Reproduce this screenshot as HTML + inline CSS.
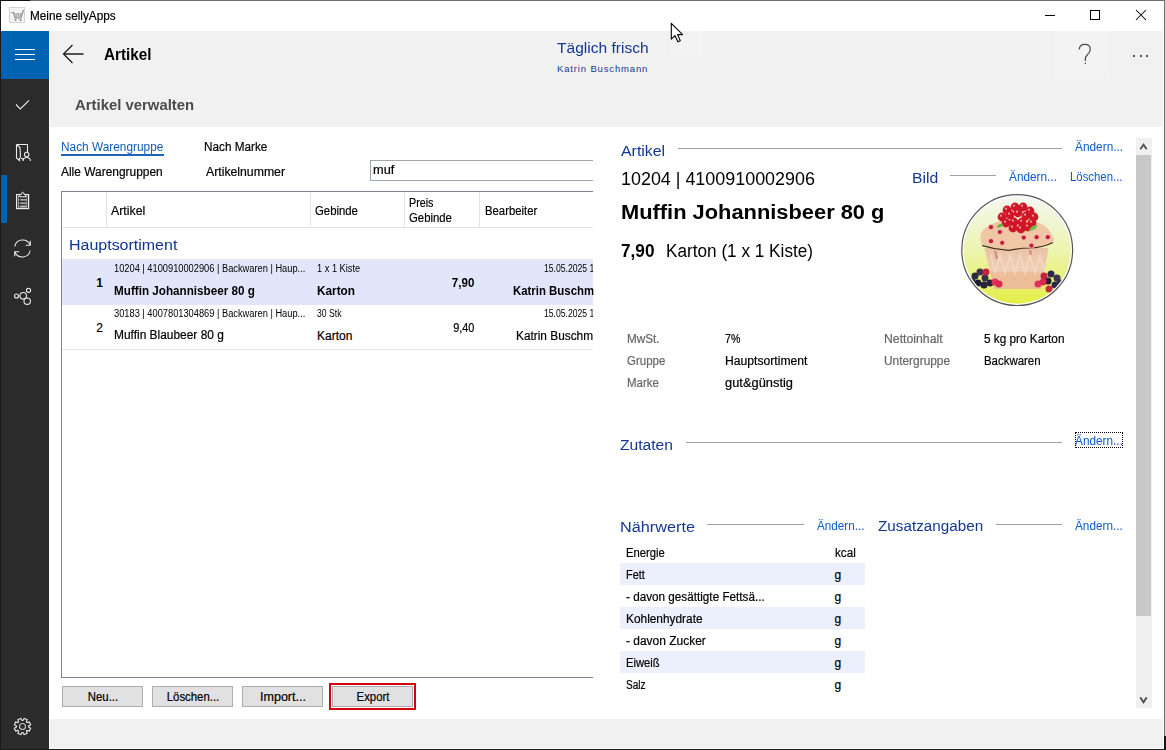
<!DOCTYPE html>
<html><head><meta charset="utf-8"><style>
html,body{margin:0;padding:0;width:1166px;height:750px;overflow:hidden;background:#fff;}
body{position:relative;font-family:"Liberation Sans",sans-serif;}
.t{position:absolute;line-height:1;white-space:nowrap;}
.s{-webkit-text-stroke:0.2px currentColor;}
.a{position:absolute;}
</style></head><body>
<!-- window chrome -->
<div class="a" style="left:0;top:0;width:1166px;height:1px;background:#6e6e6e"></div>
<div class="a" style="left:0;top:0;width:30px;height:1px;background:#111"></div>
<div class="a" style="left:0;top:0;width:1px;height:750px;background:#1a1a1a"></div>
<div class="a" style="left:1164px;top:0;width:1px;height:750px;background:#6e6e6e"></div>
<div class="a" style="left:1165px;top:0;width:1px;height:736px;background:#d4d4d4"></div>
<div class="a" style="left:1164px;top:736px;width:2px;height:14px;background:#161616"></div>
<div class="a" style="left:0;top:749px;width:1166px;height:1px;background:#1a1a1a"></div>
<!-- title bar icon -->
<div class="a" style="left:9px;top:7px;width:14px;height:14px;background:#f3f3f3;border:1px solid #d4d4d4"></div>
<svg class="a" style="left:9px;top:7px" width="17" height="17" viewBox="0 0 17 17">
 <path d="M2.5 5.5 L4.5 5.5 L6 11 L12 11 L13.5 6 L14.5 3" fill="none" stroke="#8a8a8a" stroke-width="1.1"/>
 <path d="M5 7 L13 7 M5.5 9 L12.5 9 M7 6 L7.5 11 M9.5 6 L9.5 11 M12 6 L11.2 11" fill="none" stroke="#a0a0a0" stroke-width="0.8"/>
 <circle cx="6.5" cy="13" r="1" fill="#8a8a8a"/><circle cx="11.5" cy="13" r="1" fill="#8a8a8a"/>
</svg>
<!-- caption buttons -->
<div class="a" style="left:1045px;top:15px;width:10px;height:1px;background:#000"></div>
<div class="a" style="left:1090px;top:10px;width:8px;height:8px;border:1px solid #000"></div>
<svg class="a" style="left:1135px;top:9px" width="12" height="12" viewBox="0 0 12 12"><path d="M1 1 L11 11 M11 1 L1 11" stroke="#000" stroke-width="1.05" fill="none"/></svg>

<!-- sidebar -->
<div class="a" style="left:1px;top:31px;width:48px;height:718px;background:#2b2b2b"></div>
<div class="a" style="left:1px;top:31px;width:48px;height:48px;background:#0063b1"></div>
<div class="a" style="left:15px;top:49px;width:20px;height:1px;background:#fff"></div>
<div class="a" style="left:15px;top:54px;width:20px;height:1px;background:#fff"></div>
<div class="a" style="left:15px;top:59px;width:20px;height:1px;background:#fff"></div>
<div class="a" style="left:1px;top:175px;width:6px;height:48px;background:#0063b1"></div>
<svg class="a" style="left:0;top:80px" width="49" height="670" viewBox="0 80 49 670">
 <g fill="none" stroke="#ececec" stroke-width="1.1">
  <!-- check -->
  <path d="M16 104.5 L20.3 109 L29 100.3"/>
  <!-- book/person -->
  <path d="M16.5 144.5 L27.5 144.5 L27.5 152.5 M16.5 144.5 L16.5 158 L19.5 160.5 L19.5 158.5 M16.5 144.5 L20 147.5 L20.5 157 L19.5 158.5 M21 158.5 L23 158.5 L23 160.5"/>
  <circle cx="26.7" cy="154.5" r="2.2"/>
  <path d="M23 160.8 Q23.5 157.5 26.7 157.5 Q30 157.5 30.5 160.8"/>
  <!-- clipboard -->
  <rect x="16.6" y="194.6" width="12" height="14" stroke-width="1.2"/>
  <rect x="18.3" y="196.6" width="8.6" height="10.6" stroke-width="0.7" stroke="#bdbdbd"/>
  <path d="M19.8 194.3 L19.8 196.8 L25.6 196.8 L25.6 194.3 L24 194.3 Q23.6 192.2 22.7 192.2 Q21.8 192.2 21.4 194.3 Z" fill="#2b2b2b" stroke-width="1"/>
  <path d="M20.3 199.8 H26.6 M20.3 203.1 H26.6 M20.3 206.2 H26.6" stroke="#d4d4d4" stroke-width="1.3"/>
  <path d="M18.6 199.8 H19.4 M18.6 203.1 H19.4 M18.6 206.2 H19.4" stroke="#e0e0e0" stroke-width="1"/>
 </g>
 <g fill="none" stroke="#ececec" stroke-width="1.1">
  <!-- sync -->
  <path d="M14.8 246.5 A8 8 0 0 1 30 244.8"/>
  <path d="M30.2 250.5 A8 8 0 0 1 15 252.2"/>
  <path d="M30.3 240.8 L30.3 245.3 L25.8 245.3"/>
  <path d="M14.7 256.2 L14.7 251.7 L19.2 251.7"/>
  <!-- share -->
  <circle cx="16.5" cy="296" r="2"/>
  <circle cx="23.2" cy="295.8" r="3.3"/>
  <circle cx="28.5" cy="290.3" r="2.1"/>
  <circle cx="27.2" cy="301.2" r="3.2"/>
  <!-- gear -->
 </g>
 <g transform="translate(22.5 726.5)" fill="none" stroke="#ececec" stroke-width="1.1">
  <path id="gear" d="M5.98 -0.47 L8.13 -1.65 L6.92 -4.58 L4.56 -3.90 L3.90 -4.56 L4.58 -6.92 L1.65 -8.13 L0.47 -5.98 L-0.47 -5.98 L-1.65 -8.13 L-4.58 -6.92 L-3.90 -4.56 L-4.56 -3.90 L-6.92 -4.58 L-8.13 -1.65 L-5.98 -0.47 L-5.98 0.47 L-8.13 1.65 L-6.92 4.58 L-4.56 3.90 L-3.90 4.56 L-4.58 6.92 L-1.65 8.13 L-0.47 5.98 L0.47 5.98 L1.65 8.13 L4.58 6.92 L3.90 4.56 L4.56 3.90 L6.92 4.58 L8.13 1.65 L5.98 0.47 Z"/>
  <circle r="3" stroke="#c8c8c8"/>
 </g>
</svg>

<!-- header -->
<div class="a" style="left:50px;top:31px;width:1113px;height:96px;background:#f1f1f1"></div><div class="a" style="left:1054px;top:31px;width:55px;height:48px;background:#f3f3f3"></div><div class="a" style="left:671px;top:31px;width:32px;height:24px;background:#f3f3f3"></div>
<svg class="a" style="left:60px;top:42px" width="26" height="24" viewBox="0 0 26 24"><path d="M3.5 12 H23.5 M12.5 3 L3.5 12 L12.5 21" fill="none" stroke="#1f1f1f" stroke-width="1.3"/></svg>
<svg class="a" style="left:1070px;top:40px" width="30" height="30" viewBox="0 0 30 30"><path d="M9.2 9.5 Q9.5 4.3 14.8 4.3 Q20.3 4.3 20.3 9.3 Q20.3 12.3 17.5 14.5 Q15.3 16.5 15.3 19.8 L15.3 21" fill="none" stroke="#4a4a4a" stroke-width="1.2"/><circle cx="15.3" cy="23.3" r="0.8" fill="#4a4a4a"/></svg>
<div class="a" style="left:1133px;top:55px;width:2.2px;height:2.2px;border-radius:1px;background:#222"></div>
<div class="a" style="left:1139.5px;top:55px;width:2.2px;height:2.2px;border-radius:1px;background:#222"></div>
<div class="a" style="left:1146px;top:55px;width:2.2px;height:2.2px;border-radius:1px;background:#222"></div>

<!-- bottom bar -->
<div class="a" style="left:50px;top:719px;width:1113px;height:29px;background:#f1f1f1"></div>

<!-- left panel -->
<div class="a" style="left:61px;top:154px;width:103px;height:2px;background:#1c64bc"></div>
<div class="a" style="left:370px;top:160px;width:240px;height:19px;border:1px solid #a2a6ad;background:#fff"></div>
<div class="a" style="left:61px;top:191px;width:532px;height:487px;border-top:1px solid #7e8591;border-left:1px solid #7e8591;border-bottom:1px solid #7e8591;box-sizing:border-box"></div>
<div class="a" style="left:593px;top:150px;width:20px;height:560px;background:#fff"></div>
<div class="a" style="left:106px;top:192px;width:1px;height:35px;background:#e3e3e3"></div>
<div class="a" style="left:309.5px;top:192px;width:1px;height:35px;background:#e3e3e3"></div>
<div class="a" style="left:403.5px;top:192px;width:1px;height:35px;background:#e3e3e3"></div>
<div class="a" style="left:479px;top:192px;width:1px;height:35px;background:#e3e3e3"></div>
<div class="a" style="left:62px;top:227px;width:531px;height:1px;background:#e3e3e3"></div>
<div class="a" style="left:62px;top:259px;width:531px;height:1px;background:#e8e8e8"></div>
<div class="a" style="left:62px;top:260px;width:531px;height:45px;background:#e1e6fa"></div>
<div class="a" style="left:62px;top:349px;width:531px;height:1px;background:#e8e8e8"></div>
<!-- buttons -->
<div class="a" style="left:62px;top:686px;width:81px;height:21px;box-sizing:border-box;border:1px solid #adadad;background:#e1e1e1"></div>
<div class="a" style="left:152px;top:686px;width:81px;height:21px;box-sizing:border-box;border:1px solid #adadad;background:#e1e1e1"></div>
<div class="a" style="left:242px;top:686px;width:81px;height:21px;box-sizing:border-box;border:1px solid #adadad;background:#e1e1e1"></div>
<div class="a" style="left:329px;top:683px;width:87px;height:27px;box-sizing:border-box;border:2px solid #d3000f"></div>
<div class="a" style="left:332px;top:686px;width:81px;height:21px;box-sizing:border-box;border:1px solid #adadad;background:#e1e1e1"></div>

<!-- right panel -->
<div class="a" style="left:678px;top:148px;width:384px;height:1px;background:#a0a0a0"></div>
<div class="a" style="left:950px;top:175px;width:46px;height:1px;background:#a0a0a0"></div>
<div class="a" style="left:686px;top:442px;width:376px;height:1px;background:#a0a0a0"></div>
<div class="a" style="left:707px;top:524px;width:97px;height:1px;background:#a0a0a0"></div>
<div class="a" style="left:996px;top:524px;width:66px;height:1px;background:#a0a0a0"></div>
<div class="a" style="left:1075px;top:432px;width:48px;height:16px;box-sizing:border-box;border:1px dotted #000"></div>
<div class="a" style="left:620px;top:563px;width:245px;height:22px;background:#ebf0fc"></div>
<div class="a" style="left:620px;top:607px;width:245px;height:22px;background:#ebf0fc"></div>
<div class="a" style="left:620px;top:651px;width:245px;height:22px;background:#ebf0fc"></div>
<!-- scrollbar -->
<div class="a" style="left:1136px;top:138px;width:16px;height:570px;background:#f0f0f0"></div>
<div class="a" style="left:1136px;top:155px;width:15px;height:461px;background:#c8c8c8"></div>
<svg class="a" style="left:1136px;top:138px" width="16" height="17" viewBox="0 0 16 17"><path d="M4.3 11.3 L7.5 6.6 L10.7 11.3" fill="none" stroke="#555" stroke-width="1.9"/></svg>
<svg class="a" style="left:1136px;top:691px" width="16" height="17" viewBox="0 0 16 17"><path d="M4.3 6.4 L7.5 11.2 L10.7 6.4" fill="none" stroke="#555" stroke-width="1.9"/></svg>
<!-- image -->
<svg class="a" style="left:960px;top:193px" width="114" height="114" viewBox="0 0 114 114" id="cupcake"><defs><linearGradient id="bg" x1="0" y1="0" x2="0" y2="1"><stop offset="0" stop-color="#f6f8f0"/><stop offset="0.25" stop-color="#eff5d2"/><stop offset="0.5" stop-color="#edf4b0"/><stop offset="0.8" stop-color="#e8f070"/><stop offset="1" stop-color="#e4ee48"/></linearGradient><linearGradient id="wr" x1="0" y1="0" x2="0" y2="1"><stop offset="0" stop-color="#eac3a6"/><stop offset="0.55" stop-color="#efcfb5"/><stop offset="0.6" stop-color="#efbf9c"/><stop offset="1" stop-color="#ecbc98"/></linearGradient><filter id="bl" x="-0.2" y="-0.2" width="1.4" height="1.4"><feGaussianBlur stdDeviation="0.45"/></filter><clipPath id="cc"><circle cx="57.2" cy="57.1" r="53.6"/></clipPath></defs><circle cx="57.2" cy="57.1" r="55.4" fill="#fff" stroke="#555" stroke-width="1.2"/><circle cx="57.2" cy="57.1" r="53.6" fill="url(#bg)"/><g clip-path="url(#cc)" filter="url(#bl)"><path d="M24.4 55 L88.5 55 L81.6 96 L34 96 Z" fill="url(#wr)"/><path d="M31 62 L35 80 L40 62 L45 80 L50 62 L55 80 L60 62 L65 80 L70 62 L75 80 L80 62 L84 78" fill="none" stroke="#f8e6d6" stroke-width="1.8" opacity="0.5"/><path d="M35 58 L37 66 M70 57 L71 62" stroke="#c86060" stroke-width="2.2" opacity="0.6"/><path d="M22 52.5 Q18 42 24 36 Q34 28 46 27 L70 27 Q86 30 91 40 Q95 46 93 49.5 Q82 55.5 71 55 Q60 55 50 57.5 Q38 57 22 52.5 Z" fill="#efc7a5"/><path d="M22.2 52.6 Q35 56.5 48.6 57.4 Q60 55 71 55 Q84 54 93 49.4" fill="none" stroke="#4a3222" stroke-width="1.1"/><circle cx="31" cy="34.2" r="3.2" fill="#f6b6b0" opacity="0.7"/><circle cx="31" cy="34.2" r="2.1" fill="#c41c34"/><circle cx="39.8" cy="39" r="3.2" fill="#f6b6b0" opacity="0.7"/><circle cx="39.8" cy="39" r="2.1" fill="#c41c34"/><circle cx="31" cy="48.2" r="3.2" fill="#f6b6b0" opacity="0.7"/><circle cx="31" cy="48.2" r="2.1" fill="#c41c34"/><circle cx="42.2" cy="49.8" r="3.2" fill="#f6b6b0" opacity="0.7"/><circle cx="42.2" cy="49.8" r="2.1" fill="#c41c34"/><circle cx="63.8" cy="44.6" r="3.2" fill="#f6b6b0" opacity="0.7"/><circle cx="63.8" cy="44.6" r="2.1" fill="#c41c34"/><circle cx="76.6" cy="44.2" r="3.2" fill="#f6b6b0" opacity="0.7"/><circle cx="76.6" cy="44.2" r="2.1" fill="#c41c34"/><circle cx="87.8" cy="44.2" r="3.2" fill="#f6b6b0" opacity="0.7"/><circle cx="87.8" cy="44.2" r="2.1" fill="#c41c34"/><circle cx="71.4" cy="52.6" r="3.2" fill="#f6b6b0" opacity="0.7"/><circle cx="71.4" cy="52.6" r="2.1" fill="#c41c34"/><circle cx="47" cy="17" r="4.4" fill="#d01626"/><circle cx="55" cy="14" r="4.4" fill="#d01626"/><circle cx="63" cy="14" r="4.4" fill="#d01626"/><circle cx="70" cy="18" r="4.4" fill="#d01626"/><circle cx="74" cy="24" r="4.4" fill="#d01626"/><circle cx="42" cy="24" r="4.4" fill="#d01626"/><circle cx="50" cy="22" r="4.4" fill="#d01626"/><circle cx="58" cy="20" r="4.4" fill="#d01626"/><circle cx="66" cy="23" r="4.4" fill="#d01626"/><circle cx="72" cy="30" r="4.4" fill="#d01626"/><circle cx="46" cy="30" r="4.4" fill="#d01626"/><circle cx="54" cy="29" r="4.4" fill="#d01626"/><circle cx="62" cy="29" r="4.4" fill="#d01626"/><circle cx="53" cy="35" r="4.4" fill="#d01626"/><circle cx="61" cy="36" r="4.4" fill="#d01626"/><circle cx="68" cy="34" r="4.4" fill="#d01626"/><circle cx="46" cy="15.7" r="1.1" fill="#f7b8c0" opacity="0.85"/><circle cx="54" cy="12.7" r="1.1" fill="#f7b8c0" opacity="0.85"/><circle cx="62" cy="12.7" r="1.1" fill="#f7b8c0" opacity="0.85"/><circle cx="69" cy="16.7" r="1.1" fill="#f7b8c0" opacity="0.85"/><circle cx="73" cy="22.7" r="1.1" fill="#f7b8c0" opacity="0.85"/><circle cx="41" cy="22.7" r="1.1" fill="#f7b8c0" opacity="0.85"/><circle cx="49" cy="20.7" r="1.1" fill="#f7b8c0" opacity="0.85"/><circle cx="57" cy="18.7" r="1.1" fill="#f7b8c0" opacity="0.85"/><circle cx="65" cy="21.7" r="1.1" fill="#f7b8c0" opacity="0.85"/><circle cx="71" cy="28.7" r="1.1" fill="#f7b8c0" opacity="0.85"/><circle cx="45" cy="28.7" r="1.1" fill="#f7b8c0" opacity="0.85"/><circle cx="53" cy="27.7" r="1.1" fill="#f7b8c0" opacity="0.85"/><circle cx="61" cy="27.7" r="1.1" fill="#f7b8c0" opacity="0.85"/><circle cx="52" cy="33.7" r="1.1" fill="#f7b8c0" opacity="0.85"/><circle cx="60" cy="34.7" r="1.1" fill="#f7b8c0" opacity="0.85"/><circle cx="67" cy="32.7" r="1.1" fill="#f7b8c0" opacity="0.85"/><path d="M36.5 34.5 Q39 29.5 43 31 Q42 35 36.5 34.5 Z" fill="#58b43a"/><path d="M68.5 38 Q72 31 77.5 32 Q76.5 37.5 68.5 38 Z" fill="#6cc04a"/><circle cx="15" cy="83" r="3.5" fill="#2a2a48"/><circle cx="20" cy="79" r="3.5" fill="#3a3050"/><circle cx="18" cy="90" r="3.5" fill="#1c1a30"/><circle cx="25" cy="85" r="3.5" fill="#30304a"/><circle cx="26" cy="79" r="3.5" fill="#c82040"/><circle cx="24" cy="92" r="3.5" fill="#262238"/><circle cx="12" cy="88" r="3.5" fill="#34304a"/><circle cx="30" cy="90" r="3.5" fill="#2a2440"/><circle cx="35" cy="89" r="3.5" fill="#e0305a"/><circle cx="39" cy="91" r="3.5" fill="#d82a50"/><circle cx="91" cy="81" r="3.5" fill="#2c2c48"/><circle cx="97" cy="85" r="3.5" fill="#3a3050"/><circle cx="88" cy="88" r="3.5" fill="#1c1a30"/><circle cx="95" cy="92" r="3.5" fill="#2c2a44"/><circle cx="84" cy="83" r="3.5" fill="#c42040"/><circle cx="78" cy="91" r="3.5" fill="#e0305a"/><circle cx="89" cy="96" r="3.5" fill="#c82844"/><circle cx="100" cy="90" r="3.5" fill="#342e48"/><circle cx="83" cy="89" r="3.5" fill="#d42c50"/></g></svg>
<!-- cursor -->
<svg class="a" style="left:670px;top:22px" width="16" height="22" viewBox="0 0 16 22"><path d="M1.3 1.3 L1.3 17.2 L5 13.6 L7.8 19.8 L10.3 18.7 L7.6 12.6 L12.6 12.6 Z" fill="#fff" stroke="#000" stroke-width="1.1" stroke-linejoin="round"/></svg>

<span class="t s" style="top:10.00px;font-size:12px;color:#000;left:30.30px;transform-origin:0 0;transform:scaleX(0.9808);">Meine sellyApps</span>
<span class="t" style="top:47.01px;font-size:16px;color:#000;font-weight:700;left:104.00px;transform-origin:0 0;transform:scaleX(0.9524);">Artikel</span>
<span class="t" style="top:40.01px;font-size:15.5px;color:#143794;left:557.00px;transform-origin:0 0;transform:scaleX(1.0035);">Täglich frisch</span>
<span class="t" style="top:64.00px;font-size:9.5px;color:#143794;left:557.00px;transform-origin:0 0;letter-spacing:0.85px;">Katrin Buschmann</span>
<span class="t" style="top:97.00px;font-size:15px;color:#4b4b4b;font-weight:700;left:75.00px;transform-origin:0 0;transform:scaleX(0.9926);">Artikel verwalten</span>
<span class="t" style="top:141.01px;font-size:12px;color:#0f5bb5;left:61.30px;transform-origin:0 0;transform:scaleX(0.9881);">Nach Warengruppe</span>
<span class="t s" style="top:141.01px;font-size:12px;color:#000;left:204.40px;transform-origin:0 0;transform:scaleX(0.9783);">Nach Marke</span>
<span class="t s" style="top:166.01px;font-size:12px;color:#000;left:61.00px;transform-origin:0 0;transform:scaleX(0.9940);">Alle Warengruppen</span>
<span class="t s" style="top:166.01px;font-size:12px;color:#000;left:205.60px;transform-origin:0 0;transform:scaleX(1.0213);">Artikelnummer</span>
<span class="t s" style="top:164.01px;font-size:12px;color:#000;left:373.30px;transform-origin:0 0;transform:scaleX(1.0643);">muf</span>
<span class="t s" style="top:205.00px;font-size:12px;color:#000;left:111.00px;transform-origin:0 0;transform:scaleX(1.0283);">Artikel</span>
<span class="t s" style="top:205.01px;font-size:12px;color:#000;left:314.70px;transform-origin:0 0;transform:scaleX(0.9454);">Gebinde</span>
<span class="t s" style="top:197.01px;font-size:12px;color:#000;left:408.60px;transform-origin:0 0;transform:scaleX(0.8925);">Preis</span>
<span class="t s" style="top:212.01px;font-size:12px;color:#000;left:408.60px;transform-origin:0 0;transform:scaleX(0.9454);">Gebinde</span>
<span class="t s" style="top:205.01px;font-size:12px;color:#000;left:484.50px;transform-origin:0 0;transform:scaleX(0.9428);">Bearbeiter</span>
<span class="t" style="top:237.01px;font-size:15.5px;color:#0d3596;left:68.70px;transform-origin:0 0;transform:scaleX(1.0306);">Hauptsortiment</span>
<span class="t" style="top:277.01px;font-size:12px;color:#000;font-weight:700;left:96.30px;transform-origin:0 0;">1</span>
<span class="t" style="top:264.01px;font-size:10px;color:#000;left:114.40px;transform-origin:0 0;transform:scaleX(0.9275);">10204 | 4100910002906 | Backwaren | Haup...</span>
<span class="t" style="top:285.00px;font-size:12px;color:#000;font-weight:700;left:114.40px;transform-origin:0 0;transform:scaleX(0.9740);">Muffin Johannisbeer 80 g</span>
<span class="t" style="top:264.01px;font-size:10px;color:#000;left:317.00px;transform-origin:0 0;transform:scaleX(0.9230);">1 x 1 Kiste</span>
<span class="t" style="top:285.01px;font-size:12px;color:#000;font-weight:700;left:317.00px;transform-origin:0 0;transform:scaleX(0.9834);">Karton</span>
<span class="t" style="top:277.00px;font-size:12px;color:#000;font-weight:700;right:691.40px;transform-origin:100% 0;transform:scaleX(0.9628);">7,90</span>
<span class="t" style="top:264.01px;font-size:10px;color:#000;left:544.30px;transform-origin:0 0;width:56.50px;overflow:hidden;transform:scaleX(0.8620);">15.05.2025 11:42</span>
<span class="t" style="top:285.01px;font-size:12px;color:#000;font-weight:700;left:512.60px;transform-origin:0 0;width:84.63px;overflow:hidden;transform:scaleX(0.9500);">Katrin Buschmann</span>
<span class="t s" style="top:322.00px;font-size:12px;color:#000;left:96.30px;transform-origin:0 0;">2</span>
<span class="t" style="top:309.01px;font-size:10px;color:#000;left:114.40px;transform-origin:0 0;transform:scaleX(0.9275);">30183 | 4007801304869 | Backwaren | Haup...</span>
<span class="t s" style="top:329.01px;font-size:12px;color:#000;left:114.40px;transform-origin:0 0;transform:scaleX(0.9941);">Muffin Blaubeer 80 g</span>
<span class="t" style="top:309.01px;font-size:10px;color:#000;left:317.00px;transform-origin:0 0;transform:scaleX(0.8620);">30 Stk</span>
<span class="t s" style="top:330.01px;font-size:12px;color:#000;left:317.00px;transform-origin:0 0;">Karton</span>
<span class="t s" style="top:322.01px;font-size:12px;color:#000;right:691.40px;transform-origin:100% 0;transform:scaleX(0.9079);">9,40</span>
<span class="t" style="top:309.01px;font-size:10px;color:#000;left:544.30px;transform-origin:0 0;width:56.50px;overflow:hidden;transform:scaleX(0.8620);">15.05.2025 11:42</span>
<span class="t s" style="top:330.01px;font-size:12px;color:#000;left:516.00px;transform-origin:0 0;width:78.01px;overflow:hidden;transform:scaleX(0.9870);">Katrin Buschmann</span>
<span class="t s" style="top:691.01px;font-size:12px;color:#000;left:102.50px;transform-origin:0 0;transform:translateX(-50%) scaleX(0.9501);transform-origin:50% 0;">Neu...</span>
<span class="t s" style="top:691.01px;font-size:12px;color:#000;left:192.50px;transform-origin:0 0;transform:translateX(-50%) scaleX(0.9466);transform-origin:50% 0;">Löschen...</span>
<span class="t s" style="top:691.01px;font-size:12px;color:#000;left:282.50px;transform-origin:0 0;transform:translateX(-50%) scaleX(1.0427);transform-origin:50% 0;">Import...</span>
<span class="t s" style="top:691.01px;font-size:12px;color:#000;left:372.50px;transform-origin:0 0;transform:translateX(-50%) scaleX(0.9449);transform-origin:50% 0;">Export</span>
<span class="t" style="top:143.00px;font-size:15.5px;color:#143794;left:620.60px;transform-origin:0 0;transform:scaleX(1.0253);">Artikel</span>
<span class="t" style="top:141.01px;font-size:12px;color:#0b5cd0;left:1075.00px;transform-origin:0 0;transform:scaleX(0.9884);">Ändern...</span>
<span class="t" style="top:170.01px;font-size:18px;color:#000;left:620.60px;transform-origin:0 0;transform:scaleX(0.9950);">10204 | 4100910002906</span>
<span class="t" style="top:170.00px;font-size:15.5px;color:#143794;left:911.70px;transform-origin:0 0;transform:scaleX(1.0155);">Bild</span>
<span class="t" style="top:171.01px;font-size:12px;color:#0b5cd0;left:1009.00px;transform-origin:0 0;transform:scaleX(0.9842);">Ändern...</span>
<span class="t" style="top:171.01px;font-size:12px;color:#0b5cd0;left:1070.20px;transform-origin:0 0;transform:scaleX(0.9485);">Löschen...</span>
<span class="t" style="top:202.01px;font-size:20px;color:#000;font-weight:700;left:621.00px;transform-origin:0 0;transform:scaleX(1.0924);">Muffin Johannisbeer 80 g</span>
<span class="t" style="top:242.00px;font-size:18px;color:#000;font-weight:700;left:621.00px;transform-origin:0 0;transform:scaleX(0.9565);">7,90</span>
<span class="t" style="top:242.00px;font-size:18px;color:#000;left:666.40px;transform-origin:0 0;transform:scaleX(0.9542);">Karton (1 x 1 Kiste)</span>
<span class="t s" style="top:333.01px;font-size:12px;color:#666666;left:626.60px;transform-origin:0 0;transform:scaleX(0.9788);">MwSt.</span>
<span class="t s" style="top:333.01px;font-size:12px;color:#000;left:725.40px;transform-origin:0 0;transform:scaleX(0.8827);">7%</span>
<span class="t s" style="top:355.01px;font-size:12px;color:#666666;left:626.60px;transform-origin:0 0;transform:scaleX(0.9566);">Gruppe</span>
<span class="t s" style="top:355.01px;font-size:12px;color:#000;left:725.40px;transform-origin:0 0;transform:scaleX(1.0130);">Hauptsortiment</span>
<span class="t s" style="top:377.01px;font-size:12px;color:#666666;left:626.60px;transform-origin:0 0;transform:scaleX(0.9594);">Marke</span>
<span class="t s" style="top:377.01px;font-size:12px;color:#000;left:725.40px;transform-origin:0 0;transform:scaleX(1.0732);">gut&amp;günstig</span>
<span class="t s" style="top:333.01px;font-size:12px;color:#666666;left:884.40px;transform-origin:0 0;transform:scaleX(1.0218);">Nettoinhalt</span>
<span class="t s" style="top:333.01px;font-size:12px;color:#000;left:983.60px;transform-origin:0 0;transform:scaleX(0.9806);">5 kg pro Karton</span>
<span class="t s" style="top:355.01px;font-size:12px;color:#666666;left:884.40px;transform-origin:0 0;transform:scaleX(0.9905);">Untergruppe</span>
<span class="t s" style="top:355.01px;font-size:12px;color:#000;left:983.60px;transform-origin:0 0;transform:scaleX(0.9525);">Backwaren</span>
<span class="t" style="top:437.00px;font-size:15.5px;color:#143794;left:620.20px;transform-origin:0 0;transform:scaleX(1.0069);">Zutaten</span>
<span class="t" style="top:435.01px;font-size:12px;color:#0b5cd0;left:1075.20px;transform-origin:0 0;transform:scaleX(0.9842);">Ändern...</span>
<span class="t" style="top:519.00px;font-size:15.5px;color:#143794;left:620.40px;transform-origin:0 0;transform:scaleX(1.0490);">Nährwerte</span>
<span class="t" style="top:520.01px;font-size:12px;color:#0b5cd0;left:817.20px;transform-origin:0 0;transform:scaleX(0.9739);">Ändern...</span>
<span class="t" style="top:518.01px;font-size:15.5px;color:#143794;left:878.00px;transform-origin:0 0;transform:scaleX(0.9836);">Zusatzangaben</span>
<span class="t" style="top:520.01px;font-size:12px;color:#0b5cd0;left:1075.40px;transform-origin:0 0;transform:scaleX(0.9801);">Ändern...</span>
<span class="t s" style="top:547.01px;font-size:12px;color:#000;left:626.00px;transform-origin:0 0;transform:scaleX(0.9379);">Energie</span>
<span class="t s" style="top:547.01px;font-size:12px;color:#000;left:834.60px;transform-origin:0 0;transform:scaleX(0.9722);">kcal</span>
<span class="t s" style="top:569.01px;font-size:12px;color:#000;left:626.00px;transform-origin:0 0;transform:scaleX(0.9092);">Fett</span>
<span class="t s" style="top:569.01px;font-size:12px;color:#000;left:834.60px;transform-origin:0 0;">g</span>
<span class="t s" style="top:591.01px;font-size:12px;color:#000;left:626.00px;transform-origin:0 0;transform:scaleX(0.9764);">- davon gesättigte Fettsä...</span>
<span class="t s" style="top:591.01px;font-size:12px;color:#000;left:834.60px;transform-origin:0 0;">g</span>
<span class="t s" style="top:613.01px;font-size:12px;color:#000;left:626.00px;transform-origin:0 0;transform:scaleX(0.9895);">Kohlenhydrate</span>
<span class="t s" style="top:613.01px;font-size:12px;color:#000;left:834.60px;transform-origin:0 0;">g</span>
<span class="t s" style="top:635.01px;font-size:12px;color:#000;left:626.00px;transform-origin:0 0;transform:scaleX(0.9970);">- davon Zucker</span>
<span class="t s" style="top:635.01px;font-size:12px;color:#000;left:834.60px;transform-origin:0 0;">g</span>
<span class="t s" style="top:657.01px;font-size:12px;color:#000;left:626.00px;transform-origin:0 0;transform:scaleX(0.9362);">Eiweiß</span>
<span class="t s" style="top:657.01px;font-size:12px;color:#000;left:834.60px;transform-origin:0 0;">g</span>
<span class="t s" style="top:679.01px;font-size:12px;color:#000;left:626.00px;transform-origin:0 0;transform:scaleX(0.8396);">Salz</span>
<span class="t s" style="top:679.01px;font-size:12px;color:#000;left:834.60px;transform-origin:0 0;">g</span>
</body></html>
